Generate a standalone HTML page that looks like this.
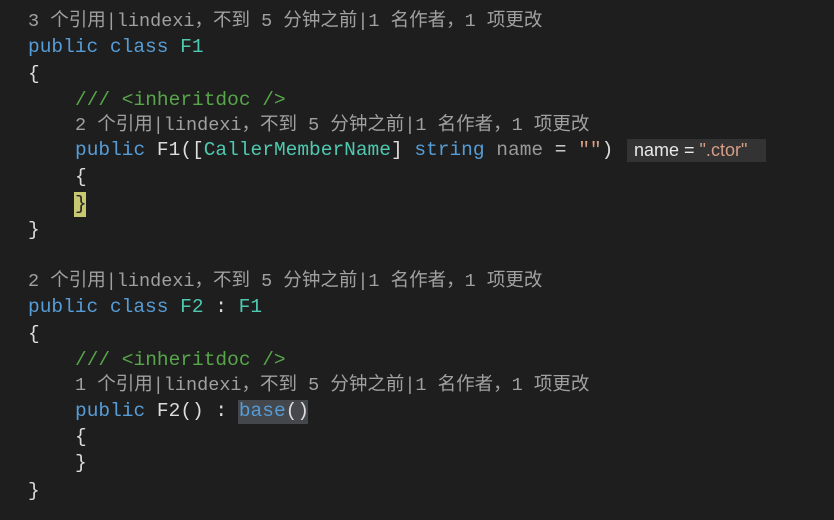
<!DOCTYPE html>
<html><head><meta charset="utf-8"><style>
body{margin:0;width:834px;height:520px;background:#1e1e1e;overflow:hidden;position:relative}
.l{position:absolute;white-space:pre;font-family:"Liberation Mono",monospace;font-size:19.5px;color:#dcdcdc;line-height:24px}
.c{font-family:"Liberation Mono","Noto Sans CJK SC",monospace;font-size:18.5px;color:#a0a0a0;letter-spacing:0}
.k{color:#569cd6}.t{color:#4ec9b0}.m{color:#57a64a}.s{color:#d69d85}.g{color:#9a9a9a}
.hint{position:absolute;left:627px;top:139px;width:139px;height:23px;background:#333;font-family:"Liberation Sans",sans-serif;font-size:18px;color:#e8e8e8;line-height:23px;padding-left:7px;box-sizing:border-box}
</style></head><body>
<div class="l c" style="left:28px;top:10px">3 个引用|lindexi，不到 5 分钟之前|1 名作者，1 项更改</div>
<div class="l" style="left:28px;top:35px"><span class="k">public class </span><span class="t">F1</span></div>
<div class="l" style="left:28px;top:62px">{</div>
<div class="l m" style="left:75px;top:88px">/// &lt;inheritdoc /&gt;</div>
<div class="l c" style="left:75px;top:114px">2 个引用|lindexi，不到 5 分钟之前|1 名作者，1 项更改</div>
<div class="l" style="left:75px;top:138px"><span class="k">public</span> F1([<span class="t">CallerMemberName</span>] <span class="k">string</span> <span class="g">name</span> = <span class="s">""</span>)</div>
<div class="hint">name = <span style="color:#d69d85">".ctor"</span></div>
<div class="l" style="left:75px;top:165px">{</div>
<div style="position:absolute;left:74px;top:192px;width:12px;height:25px;background:#c8c870"></div>
<div class="l" style="left:75px;top:192px;color:#222">}</div>
<div class="l" style="left:28px;top:218px">}</div>
<div class="l c" style="left:28px;top:270px">2 个引用|lindexi，不到 5 分钟之前|1 名作者，1 项更改</div>
<div class="l" style="left:28px;top:295px"><span class="k">public class </span><span class="t">F2</span> : <span class="t">F1</span></div>
<div class="l" style="left:28px;top:322px">{</div>
<div class="l m" style="left:75px;top:348px">/// &lt;inheritdoc /&gt;</div>
<div class="l c" style="left:75px;top:374px">1 个引用|lindexi，不到 5 分钟之前|1 名作者，1 项更改</div>
<div style="position:absolute;left:238px;top:400px;width:70px;height:24px;background:#44474c"></div>
<div class="l" style="left:75px;top:399px"><span class="k">public</span> F2() : <span class="k">base</span>()</div>
<div class="l" style="left:75px;top:425px">{</div>
<div class="l" style="left:75px;top:451px">}</div>
<div class="l" style="left:28px;top:479px">}</div>
</body></html>
